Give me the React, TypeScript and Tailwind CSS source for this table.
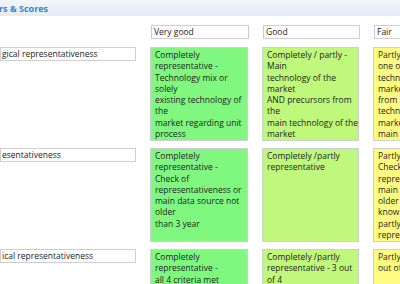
import React from 'react';

type Row = {
  label: string;
  cells: string[][];
};

const rows: Row[] = [
  {
    label: 'gical representativeness',
    cells: [
      ['Completely', 'representative -', 'Technology mix or', 'solely', 'existing technology of', 'the', 'market regarding unit', 'process'],
      ['Completely / partly -', 'Main', 'technology of the', 'market', 'AND precursors from', 'the', 'main technology of the', 'market'],
      ['Partly representative', 'one of the main', 'technologies of the', 'market AND precursors', 'from the main', 'technology of the', 'market OR precursors', 'main technology'],
    ],
  },
  {
    label: 'esentativeness',
    cells: [
      ['Completely', 'representative -', 'Check of', 'representativeness or', 'main data source not', 'older', 'than 3 year'],
      ['Completely /partly', 'representative'],
      ['Partly representative', 'Check of', 'representativeness or', 'main data source not', 'older than 6 years', 'known', 'partly', 'representative'],
    ],
  },
  {
    label: 'ical representativeness',
    cells: [
      ['Completely', 'representative -', 'all 4 criteria met'],
      ['Completely /partly', 'representative - 3 out', 'of 4'],
      ['Partly representative - 2', 'out of 4'],
    ],
  },
];

const colours = ['bg-[#80f880]', 'bg-[#c0f87c]', 'bg-[#fffb82]'];
const widths = ['w-[98px]', 'w-[97px]', 'w-[98px]'];
const headers = ['Very good', 'Good', 'Fair'];

const Cell: React.FC<{ lines: string[]; colour: string; width: string }> = ({ lines, colour, width }) => (
  <div className={`${width} shrink-0 h-[94px] border border-[#cfcfcf] ${colour} px-[4px] pt-[1px] text-[8.5px] leading-[11.3px] text-[#1e1e1e] whitespace-nowrap overflow-hidden`}>
    {lines.map((l, i) => (
      <div key={i}>{l}</div>
    ))}
  </div>
);

export default function App() {
  return (
    <div className="w-[400px] h-[284px] overflow-hidden bg-white relative" style={{ fontFamily: '"Open Sans", "Noto Sans", sans-serif' }}>
      <div className="h-[16px] bg-gradient-to-b from-[#f2f6fb] to-[#e3ebf5] flex items-center">
        <span className="text-[9px] font-bold text-[#3b7fd4] leading-none -ml-[1px]">rs &amp; Scores</span>
      </div>

      <div className="mt-[9px] flex flex-col">
        <div className="flex gap-x-[14px] h-[14px]">
          <div className="w-[137px] shrink-0" />
          {headers.map((h, i) => (
            <div key={h} className={`${widths[i]} shrink-0 border border-[#cfcfcf] bg-white px-[2px] text-[8.5px] leading-[12px] text-[#1e1e1e] whitespace-nowrap overflow-hidden`}>
              {h}
            </div>
          ))}
        </div>

        {rows.map((r, ri) => (
          <div key={ri} className={`flex gap-x-[14px] ${ri === 0 ? 'mt-[8px]' : 'mt-[7px]'}`}>
            <div className="w-[137px] shrink-0 self-start -ml-[1px] pl-[1px]">
              <div className="h-[14px] border border-[#cfcfcf] bg-white pl-[1px] text-[8.5px] leading-[12px] text-[#1e1e1e] whitespace-nowrap overflow-hidden">
                {r.label}
              </div>
            </div>
            {r.cells.map((c, ci) => (
              <Cell key={ci} lines={c} colour={colours[ci]} width={widths[ci]} />
            ))}
          </div>
        ))}
      </div>
    </div>
  );
}
